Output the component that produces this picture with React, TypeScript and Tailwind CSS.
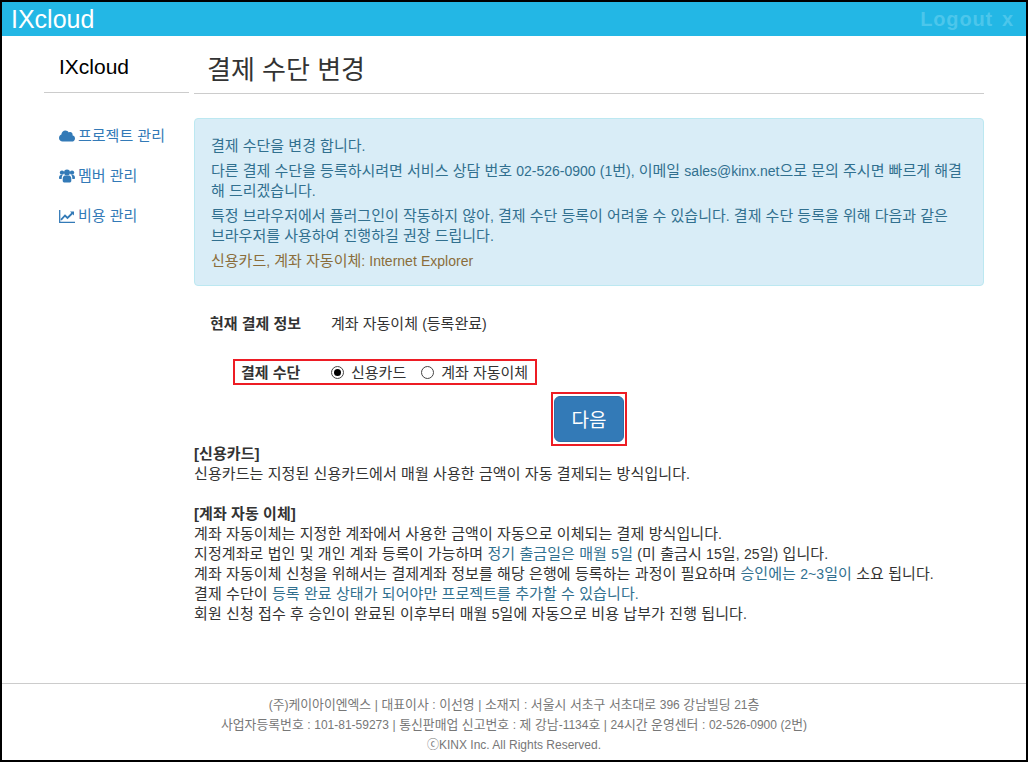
import React from "react";
import { FaCloud } from "react-icons/fa";

const FONT = "font-['Liberation_Sans','Noto_Sans_CJK_KR',sans-serif]";

// Hangul runs are set in the parent's (larger) size; Latin tokens keep the base size.
function T({ s, latin = "text-[14px]" }: { s: string; latin?: string }) {
  const parts = s.split(/([A-Za-z0-9@.,:~()|\-©]+)/);
  return (
    <>
      {parts.map((p, i) => (i % 2 === 1 ? <span key={i} className={latin}>{p}</span> : <React.Fragment key={i}>{p}</React.Fragment>))}
    </>
  );
}

function Users() {
  return (
    <svg width="16" height="14" viewBox="0 0 16 14" fill="currentColor">
      <circle cx="3" cy="3.6" r="2.2" />
      <circle cx="13" cy="3.6" r="2.2" />
      <circle cx="8" cy="3.4" r="3" />
      <path d="M0 9c0-2 .8-3 2-3h1.6c-.6.8-.9 1.9-.9 3.2v.8H1c-.6 0-1-.4-1-1zM16 9c0-2-.8-3-2-3h-1.6c.6.8.9 1.9.9 3.2v.8H15c.6 0 1-.4 1-1z" />
      <path d="M3.7 10c0-2.4 1-3.6 2.3-3.6h4c1.300 0 2.300 1.200 2.300 3.600v1.800c0 1.200-.8 1.800-1.800 1.800H5.500c-1 0-1.800-.6-1.800-1.800z" />
    </svg>
  );
}

function Chart() {
  return (
    <svg width="16" height="13" viewBox="0 0 16 13" fill="none" stroke="currentColor">
      <path d="M.7 0v12.300H16" strokeWidth="1.300" />
      <path d="M2 9.800 6 5.500l2.500 2.500L13.500 3" strokeWidth="1.800" />
      <path d="M11 1.500h4v4z" fill="currentColor" stroke="none" />
    </svg>
  );
}

function Nav({ icon, label }: { icon: React.ReactNode; label: string }) {
  return (
    <div className="flex items-center gap-[3px] h-[40px] text-[15px] text-[#337ab7]">
      <span className="w-[16px] flex justify-center">{icon}</span>
      <span>{label}</span>
    </div>
  );
}

export default function App() {
  return (
    <div className={`${FONT} w-[1028px] h-[762px] border-2 border-black bg-white flex flex-col text-[15px] leading-[20px] text-[#333] overflow-hidden`}>
      <header className="h-[34px] shrink-0 bg-[#23b7e5] flex items-center justify-between pl-[9px] pr-[13px]">
        <span className="text-[25px] leading-[30px] text-white">IXcloud</span>
        <span className="flex text-[20px] font-bold text-[#4cc6eb]">
          <span className="tracking-[0.8px]">Logout</span>
          <span className="ml-[9px]">x</span>
        </span>
      </header>

      <div className="flex flex-1 min-h-0 pl-[42px]">
        <aside className="w-[145px] shrink-0">
          <div className="h-[57px] border-b border-[#ccc] pl-[15px] pt-[19px] text-[21px] leading-[24px] text-black">IXcloud</div>
          <div className="pl-[15px] pt-[23px]">
            <Nav icon={<FaCloud size={16} />} label="프로젝트 관리" />
            <Nav icon={<Users />} label="멤버 관리" />
            <Nav icon={<Chart />} label="비용 관리" />
          </div>
        </aside>

        <main className="ml-[5px] w-[790px] shrink-0">
          <h1 className="h-[58px] border-b border-[#ccc] pl-[13px] pt-[17px] text-[26px] leading-[34px] font-normal">결제 수단 변경</h1>

          <div className="mt-[24px] h-[168px] rounded-[4px] border border-[#bce8f1] bg-[#d9edf7] text-[#31708f] px-[16px] pt-[17px]">
            <p className="mb-[5px]"><T s="결제 수단을 변경 합니다." /></p>
            <p className="mb-[5px]">
              <T s="다른 결제 수단을 등록하시려면 서비스 상담 번호 02-526-0900 (1번), 이메일 sales@kinx.net으로 문의 주시면 빠르게 해결해 드리겠습니다." />
            </p>
            <p className="mb-[5px]">
              <T s="특정 브라우저에서 플러그인이 작동하지 않아, 결제 수단 등록이 어려울 수 있습니다. 결제 수단 등록을 위해 다음과 같은" />
              <br />
              <T s="브라우저를 사용하여 진행하길 권장 드립니다." />
            </p>
            <p className="text-[#8a6d3b]"><T s="신용카드, 계좌 자동이체: Internet Explorer" /></p>
          </div>

          <div className="flex mt-[28px] h-[20px] pl-[16px]">
            <span className="w-[121px] font-bold">현재 결제 정보</span>
            <span><T s="계좌 자동이체 (등록완료)" /></span>
          </div>

          <div className="mt-[25px] ml-[39px] w-[304px] h-[26px] border-2 border-[#ed1c24] flex items-center pl-[6px]">
            <span className="w-[90px] pt-[2px] font-bold">결제 수단</span>
            <span className="w-[13px] h-[13px] rounded-full border border-[#444] flex items-center justify-center mr-[7px]">
              <span className="w-[7px] h-[7px] rounded-full bg-black" />
            </span>
            <span className="mr-[15px] pt-[2px]">신용카드</span>
            <span className="w-[13px] h-[13px] rounded-full border border-[#444] mr-[7px]" />
            <span className="pt-[2px]">계좌 자동이체</span>
          </div>

          <div className="mt-[7px] ml-[357px] w-[76px] h-[54px] border-2 border-[#ed1c24] px-[1px] py-[2px]">
            <div className="w-full h-full rounded-[6px] bg-[#337ab7] border border-[#2e6da4] flex items-center justify-center pt-[3px] text-white text-[19px]">다음</div>
          </div>

          <section className="-mt-[2px] tracking-[0.08px]">
            <p className="font-bold"><T s="[신용카드]" /></p>
            <p><T s="신용카드는 지정된 신용카드에서 매월 사용한 금액이 자동 결제되는 방식입니다." /></p>
            <p className="mt-[20px] font-bold"><T s="[계좌 자동 이체]" /></p>
            <p><T s="계좌 자동이체는 지정한 계좌에서 사용한 금액이 자동으로 이체되는 결제 방식입니다." /></p>
            <p><T s="지정계좌로 법인 및 개인 계좌 등록이 가능하며 " /><span className="text-[#31708f]"><T s="정기 출금일은 매월 5일" /></span><T s=" (미 출금시 15일, 25일) 입니다." /></p>
            <p><T s="계좌 자동이체 신청을 위해서는 결제계좌 정보를 해당 은행에 등록하는 과정이 필요하며 " /><span className="text-[#31708f]"><T s="승인에는 2~3일이" /></span><T s=" 소요 됩니다." /></p>
            <p><T s="결제 수단이 " /><span className="text-[#31708f]"><T s="등록 완료 상태가 되어야만 프로젝트를 추가할 수 있습니다." /></span></p>
            <p><T s="회원 신청 접수 후 승인이 완료된 이후부터 매월 5일에 자동으로 비용 납부가 진행 됩니다." /></p>
          </section>
        </main>
      </div>

      <footer className="h-[77px] shrink-0 border-t border-[#ccc] pt-[11px] text-center text-[12.85px] leading-[20px] text-[#777]">
        <p><T latin="text-[12px]" s="(주)케이아이엔엑스 | 대표이사 : 이선영 | 소재지 : 서울시 서초구 서초대로 396 강남빌딩 21층" /></p>
        <p><T latin="text-[12px]" s="사업자등록번호 : 101-81-59273 | 통신판매업 신고번호 : 제 강남-1134호 | 24시간 운영센터 : 02-526-0900 (2번)" /></p>
        <p className="text-[12px]">ⓒKINX Inc. All Rights Reserved.</p>
      </footer>
    </div>
  );
}
